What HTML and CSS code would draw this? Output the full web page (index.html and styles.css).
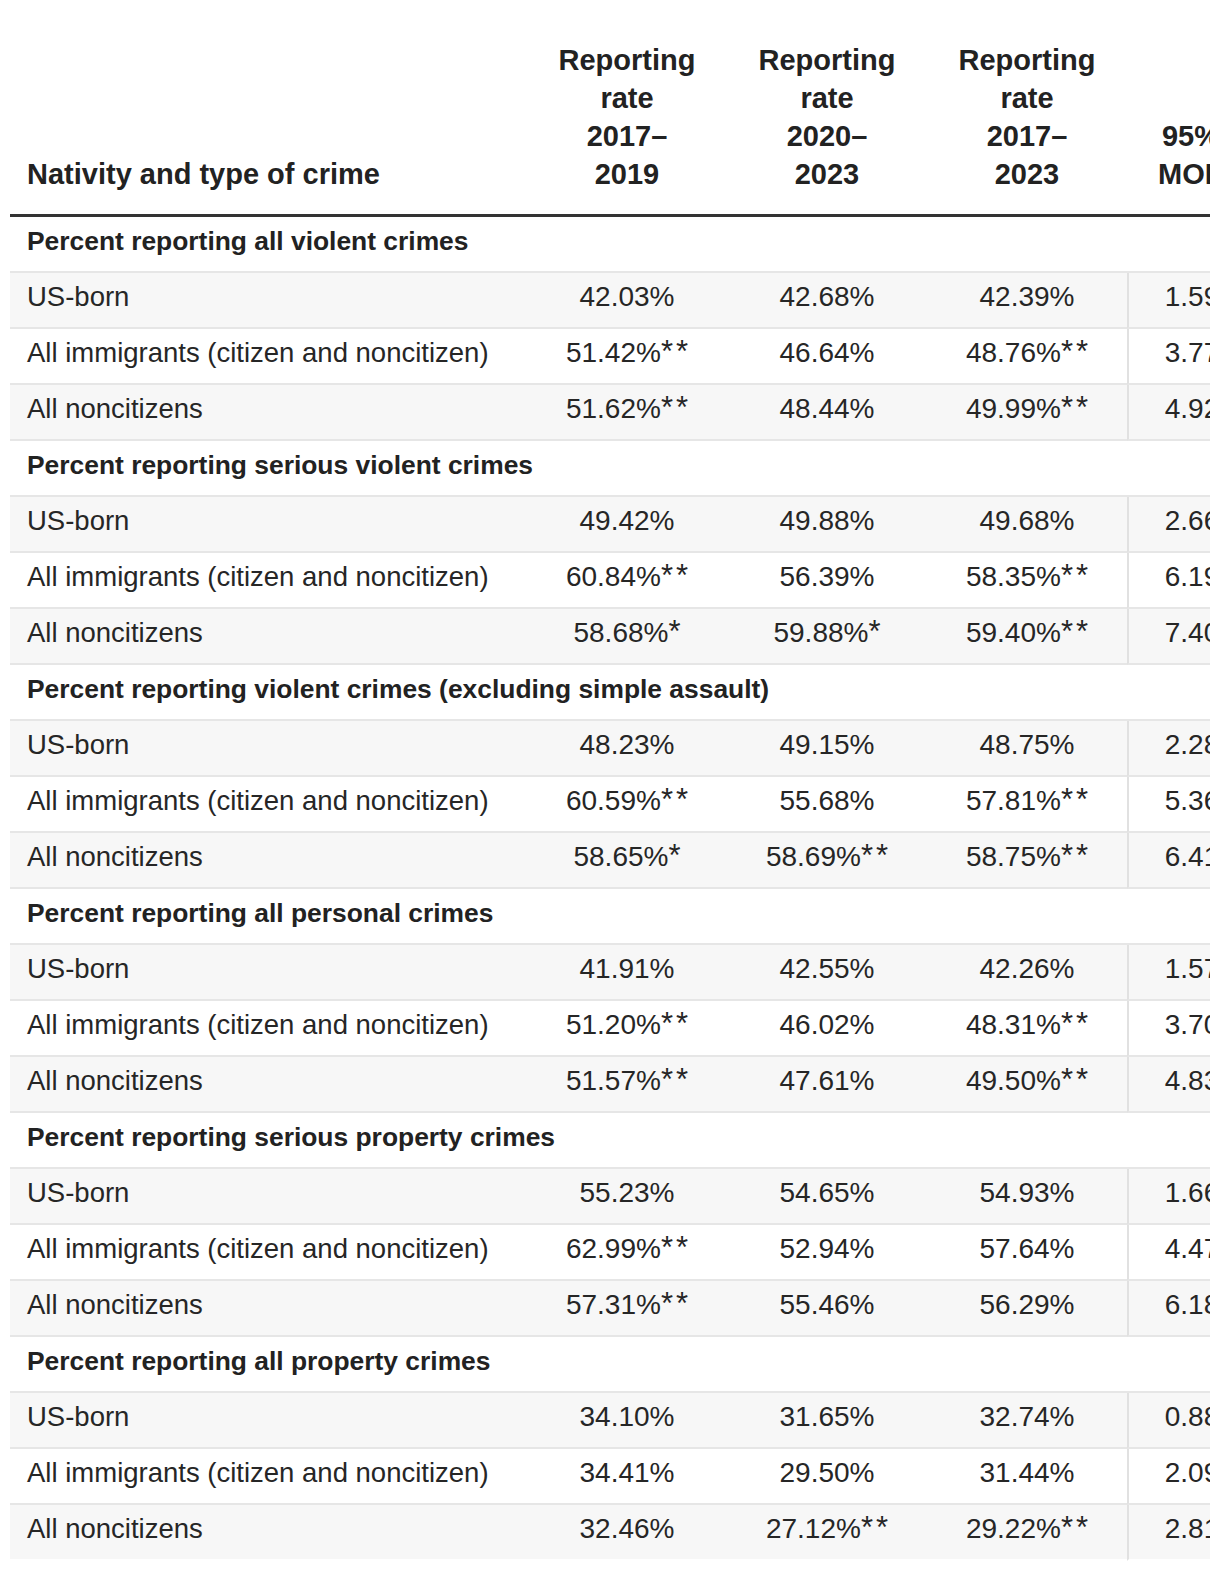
FILE: index.html
```html
<!DOCTYPE html>
<html lang="en">
<head>
<meta charset="utf-8">
<title>Crime reporting rates by nativity</title>
<link rel="stylesheet" href="styles.css">
</head>
<body>
<div class="table-wrap">
<table class="data-table">
<colgroup>
<col class="c-label"><col class="c-num"><col class="c-num"><col class="c-num"><col class="c-moe">
</colgroup>
<thead>
<tr>
<th class="th-label">Nativity and type of crime</th>
<th>Reporting<br>rate<br>2017–<br>2019</th>
<th>Reporting<br>rate<br>2020–<br>2023</th>
<th>Reporting<br>rate<br>2017–<br>2023</th>
<th>95%<br>MOE</th>
</tr>
</thead>
<tbody>
<tr class="section"><td colspan="5">Percent reporting all violent crimes</td></tr>
<tr class="odd"><td class="lbl">US-born</td><td>42.03%</td><td>42.68%</td><td>42.39%</td><td class="moe">1.59</td></tr>
<tr><td class="lbl">All immigrants (citizen and noncitizen)</td><td>51.42%<span class="ast">**</span></td><td>46.64%</td><td>48.76%<span class="ast">**</span></td><td class="moe">3.77</td></tr>
<tr class="odd"><td class="lbl">All noncitizens</td><td>51.62%<span class="ast">**</span></td><td>48.44%</td><td>49.99%<span class="ast">**</span></td><td class="moe">4.92</td></tr>

<tr class="section"><td colspan="5">Percent reporting serious violent crimes</td></tr>
<tr class="odd"><td class="lbl">US-born</td><td>49.42%</td><td>49.88%</td><td>49.68%</td><td class="moe">2.66</td></tr>
<tr><td class="lbl">All immigrants (citizen and noncitizen)</td><td>60.84%<span class="ast">**</span></td><td>56.39%</td><td>58.35%<span class="ast">**</span></td><td class="moe">6.19</td></tr>
<tr class="odd"><td class="lbl">All noncitizens</td><td>58.68%<span class="ast">*</span></td><td>59.88%<span class="ast">*</span></td><td>59.40%<span class="ast">**</span></td><td class="moe">7.40</td></tr>

<tr class="section"><td colspan="5">Percent reporting violent crimes (excluding simple assault)</td></tr>
<tr class="odd"><td class="lbl">US-born</td><td>48.23%</td><td>49.15%</td><td>48.75%</td><td class="moe">2.28</td></tr>
<tr><td class="lbl">All immigrants (citizen and noncitizen)</td><td>60.59%<span class="ast">**</span></td><td>55.68%</td><td>57.81%<span class="ast">**</span></td><td class="moe">5.36</td></tr>
<tr class="odd"><td class="lbl">All noncitizens</td><td>58.65%<span class="ast">*</span></td><td>58.69%<span class="ast">**</span></td><td>58.75%<span class="ast">**</span></td><td class="moe">6.41</td></tr>

<tr class="section"><td colspan="5">Percent reporting all personal crimes</td></tr>
<tr class="odd"><td class="lbl">US-born</td><td>41.91%</td><td>42.55%</td><td>42.26%</td><td class="moe">1.57</td></tr>
<tr><td class="lbl">All immigrants (citizen and noncitizen)</td><td>51.20%<span class="ast">**</span></td><td>46.02%</td><td>48.31%<span class="ast">**</span></td><td class="moe">3.70</td></tr>
<tr class="odd"><td class="lbl">All noncitizens</td><td>51.57%<span class="ast">**</span></td><td>47.61%</td><td>49.50%<span class="ast">**</span></td><td class="moe">4.83</td></tr>

<tr class="section"><td colspan="5">Percent reporting serious property crimes</td></tr>
<tr class="odd"><td class="lbl">US-born</td><td>55.23%</td><td>54.65%</td><td>54.93%</td><td class="moe">1.66</td></tr>
<tr><td class="lbl">All immigrants (citizen and noncitizen)</td><td>62.99%<span class="ast">**</span></td><td>52.94%</td><td>57.64%</td><td class="moe">4.47</td></tr>
<tr class="odd"><td class="lbl">All noncitizens</td><td>57.31%<span class="ast">**</span></td><td>55.46%</td><td>56.29%</td><td class="moe">6.18</td></tr>

<tr class="section"><td colspan="5">Percent reporting all property crimes</td></tr>
<tr class="odd"><td class="lbl">US-born</td><td>34.10%</td><td>31.65%</td><td>32.74%</td><td class="moe">0.88</td></tr>
<tr><td class="lbl">All immigrants (citizen and noncitizen)</td><td>34.41%</td><td>29.50%</td><td>31.44%</td><td class="moe">2.09</td></tr>
<tr class="odd last"><td class="lbl">All noncitizens</td><td>32.46%</td><td>27.12%<span class="ast">**</span></td><td>29.22%<span class="ast">**</span></td><td class="moe">2.81</td></tr>
</tbody>
</table>
</div>
</body>
</html>
```

FILE: styles.css
```css
html, body {
  margin: 0;
  padding: 0;
  background: #ffffff;
}

body {
  font-family: "Liberation Sans", Arial, sans-serif;
  color: #222222;
}

.table-wrap {
  margin-left: 10px;
  width: 1200px;
  overflow: hidden;
}

.data-table {
  border-collapse: separate;
  border-spacing: 0;
  table-layout: fixed;
  width: 1245px;
}

.c-label { width: 517px; }
.c-num { width: 200px; }
.c-moe { width: 128px; }

.data-table th {
  font-weight: 700;
  font-size: 29px;
  line-height: 38px;
  text-align: center;
  vertical-align: bottom;
  padding: 41px 8px 21px;
  border-bottom: 3px solid #333333;
  color: #222222;
}

.data-table th.th-label {
  text-align: left;
  padding-left: 17px;
}

.data-table td {
  font-size: 28px;
  line-height: 32px;
  height: 32px;
  padding: 8px 8px 14px;
  text-align: center;
  border-bottom: 2px solid #e6e6e6;
  white-space: nowrap;
  color: #262626;
}

.data-table td.lbl {
  text-align: left;
  padding-left: 17px;
  font-size: 27.5px;
}

.data-table td.moe {
  border-left: 2px solid #e1e1e1;
}

.data-table tr.odd td {
  background: #f7f7f7;
}

.data-table tr.section td {
  font-weight: 700;
  font-size: 26.4px;
  text-align: left;
  padding: 8px 17px 14px;
  color: #222222;
  background: #ffffff;
}

.data-table tr.last td {
  border-bottom-color: #ffffff;
}

.ast {
  font-size: 31px;
  line-height: 0;
  letter-spacing: 3px;
  margin-right: -3px;
}
```
